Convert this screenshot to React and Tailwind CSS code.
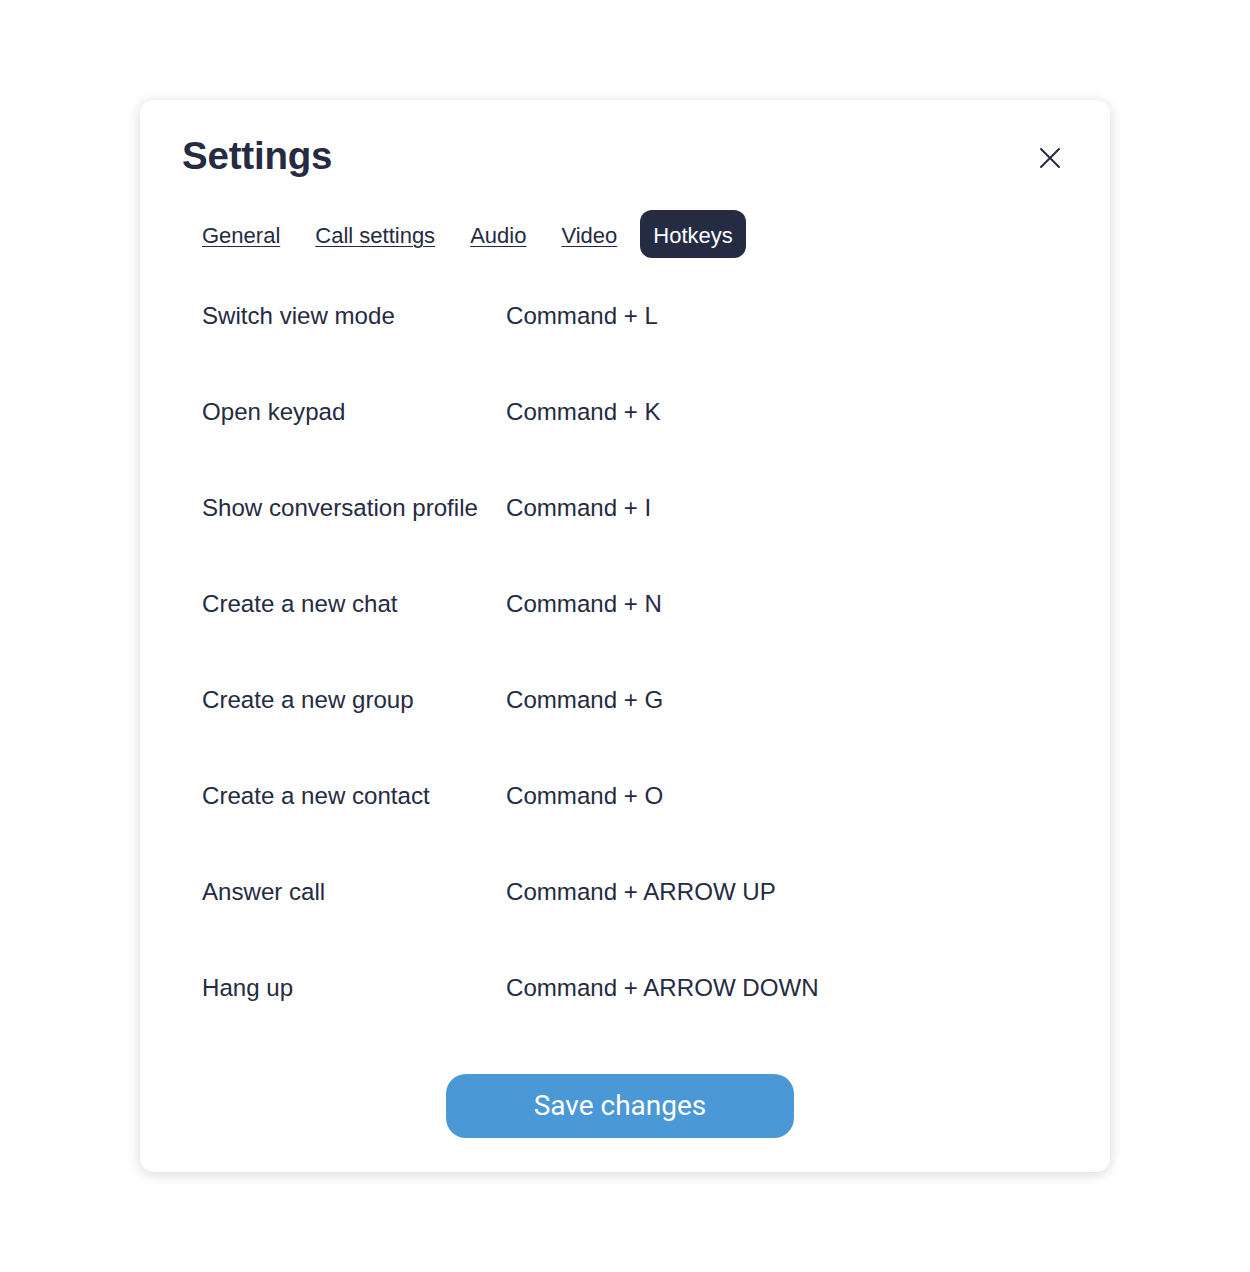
import React, { useState } from 'react';

const tabs = ['General', 'Call settings', 'Audio', 'Video', 'Hotkeys'];

const hotkeys = [
    ['Switch view mode', 'Command + L'],
    ['Open keypad', 'Command + K'],
    ['Show conversation profile', 'Command + I'],
    ['Create a new chat', 'Command + N'],
    ['Create a new group', 'Command + G'],
    ['Create a new contact', 'Command + O'],
    ['Answer call', 'Command + ARROW UP'],
    ['Hang up', 'Command + ARROW DOWN'],
];

export default function App() {
    const [active, setActive] = useState('Hotkeys');

    return (
        <div className="min-h-screen bg-white pt-[100px] font-['Liberation_Sans',Arial,sans-serif] text-[#252b42]">
            <div className="mx-auto w-[970px] rounded-[14px] bg-white px-[42px] pt-[28px] pb-[34px] shadow-[0_2px_14px_rgba(0,0,0,0.16)]">
                <div className="flex items-start justify-between">
                    <h1 className="text-[38.5px] font-bold leading-[56px] tracking-[-0.2px]">Settings</h1>
                    <button className="mt-[18px] mr-[6px] text-[#252b42]" aria-label="Close">
                        <svg width="24" height="24" viewBox="0 0 24 24" fill="none" stroke="currentColor" strokeWidth="2" strokeLinecap="round">
                            <path d="M3 3L21 21M21 3L3 21" />
                        </svg>
                    </button>
                </div>

                {/* Tabs */}
                <div className="mt-[26px] ml-[8px] flex gap-[11px]">
                    {tabs.map(tab => (
                        <button
                            key={tab}
                            onClick={() => setActive(tab)}
                            className={
                                tab === active
                                    ? 'h-[48px] rounded-[12px] bg-[#252b42] px-[13px] pt-[2px] text-[22px] text-white'
                                    : 'h-[48px] rounded-[12px] px-3 pt-[2px] text-[22px] text-[#252b42] underline decoration-1 underline-offset-[3px]'
                            }
                        >
                            {tab}
                        </button>
                    ))}
                </div>

                {/* Hotkey list */}
                <div className="mt-[10px] ml-[20px]">
                    {hotkeys.map(([label, keys]) => (
                        <div key={label} className="flex h-[96px] items-center text-[24.1px]">
                            <span className="w-[304px]">{label}</span>
                            <span>{keys}</span>
                        </div>
                    ))}
                </div>

                <div className="mt-[38px] flex justify-center pr-[10px]">
                    <button className="h-[64px] w-[348px] rounded-[20px] bg-[#4a98d6] font-['Roboto',sans-serif] text-[28px] text-white">
                        Save changes
                    </button>
                </div>
            </div>
        </div>
    );
}
